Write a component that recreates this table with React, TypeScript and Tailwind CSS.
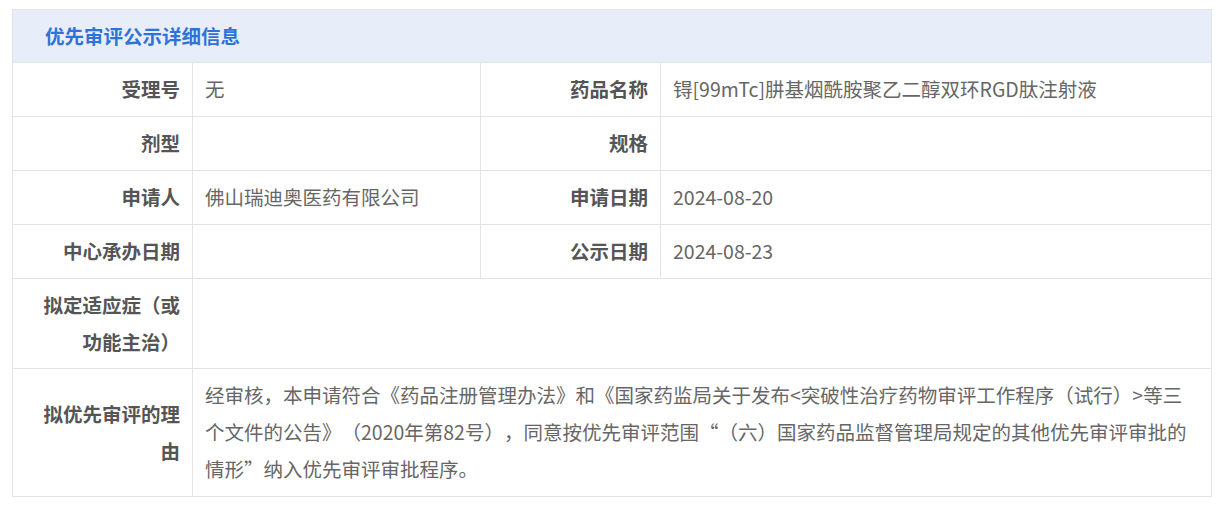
const rows: { label: string; value: string; label2?: string; value2?: string }[] = [
  { label: "受理号", value: "无", label2: "药品名称", value2: "锝[99mTc]肼基烟酰胺聚乙二醇双环RGD肽注射液" },
  { label: "剂型", value: "", label2: "规格", value2: "" },
  { label: "申请人", value: "佛山瑞迪奥医药有限公司", label2: "申请日期", value2: "2024-08-20" },
  { label: "中心承办日期", value: "", label2: "公示日期", value2: "2024-08-23" },
];

const labelCls =
  "flex items-center justify-end border-r border-b border-[#e3e3e3] px-3 py-2 text-right font-bold text-[#555555] leading-[36.9px]";
const valueCls =
  "flex items-center border-r border-b border-[#e3e3e3] px-3 py-2 text-[#666666] leading-[36.9px]";

export default function App() {
  return (
    <div
      className="min-h-[507px] bg-white pl-[12px] pt-[9px] text-[19.5px] [text-spacing-trim:space-all]"
      style={{ fontFamily: '"Microsoft YaHei", "Noto Sans CJK SC", "Noto Sans", sans-serif' }}
    >
      <div className="w-[1200px] border-l border-t border-[#e3e3e3]">
        {/* Header */}
        <div className="border-r border-b border-[#e3e3e3] bg-[#e7eefa] py-2 pl-[32px] font-bold leading-[36px] text-[#2f72d8]">
          优先审评公示详细信息
        </div>

        <div className="grid grid-cols-[180px_288px_180px_1fr]">
          {rows.map((r) => (
            <div key={r.label} className="contents">
              <div className={labelCls}>{r.label}</div>
              <div className={valueCls}>{r.value}</div>
              <div className={labelCls}>{r.label2}</div>
              <div className={valueCls}>{r.value2}</div>
            </div>
          ))}

          <div className={labelCls}>拟定适应症（或功能主治）</div>
          <div className={`${valueCls} col-span-3`} />

          <div className={labelCls}>拟优先审评的理由</div>
          <div className={`${valueCls} col-span-3`}>
            经审核，本申请符合《药品注册管理办法》和《国家药监局关于发布&lt;突破性治疗药物审评工作程序（试行）&gt;等三个文件的公告》（2020年第82号），同意按优先审评范围“（六）国家药品监督管理局规定的其他优先审评审批的情形”纳入优先审评审批程序。
          </div>
        </div>
      </div>
    </div>
  );
}
